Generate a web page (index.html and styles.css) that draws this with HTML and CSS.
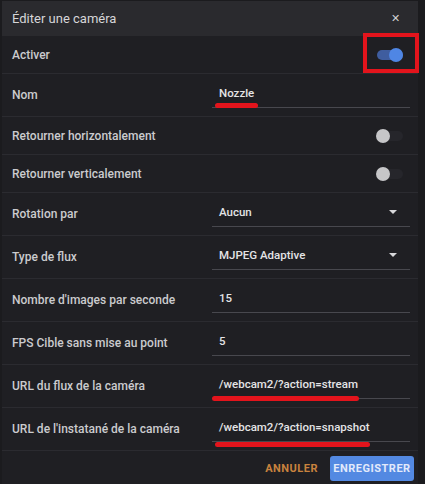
FILE: index.html
```html
<!DOCTYPE html>
<html lang="fr">
<head>
<meta charset="utf-8">
<title>Éditer une caméra</title>
<link rel="stylesheet" href="styles.css">
</head>
<body>
<div class="dialog">
  <div class="header">
    <span class="title">Éditer une caméra</span>
    <span class="close">✕</span>
  </div>
  <div class="body">
    <div class="row sw">
      <span class="label">Activer</span>
      <span class="switch on"><span class="track"></span><span class="thumb"></span></span>
      <span class="mark-box"></span>
    </div>
    <div class="row inp">
      <span class="label">Nom</span>
      <span class="field"><span class="val">Nozzle</span></span>
      <span class="mark-line m-nom"></span>
    </div>
    <div class="row sw">
      <span class="label">Retourner horizontalement</span>
      <span class="switch"><span class="track"></span><span class="thumb"></span></span>
    </div>
    <div class="row sw">
      <span class="label">Retourner verticalement</span>
      <span class="switch"><span class="track"></span><span class="thumb"></span></span>
    </div>
    <div class="row inp">
      <span class="label">Rotation par</span>
      <span class="field select"><span class="val">Aucun</span><span class="caret"></span></span>
    </div>
    <div class="row inp">
      <span class="label">Type de flux</span>
      <span class="field select"><span class="val">MJPEG Adaptive</span><span class="caret"></span></span>
    </div>
    <div class="row inp">
      <span class="label">Nombre d'images par seconde</span>
      <span class="field"><span class="val">15</span></span>
    </div>
    <div class="row inp">
      <span class="label">FPS Cible sans mise au point</span>
      <span class="field"><span class="val">5</span></span>
    </div>
    <div class="row inp">
      <span class="label">URL du flux de la caméra</span>
      <span class="field"><span class="val">/webcam2/?action=stream</span></span>
      <span class="mark-line m-stream"></span>
    </div>
    <div class="row inp last">
      <span class="label">URL de l'instatané de la caméra</span>
      <span class="field"><span class="val">/webcam2/?action=snapshot</span></span>
      <span class="mark-line m-snap"></span>
    </div>
    <div class="actions">
      <span class="btn-text">ANNULER</span>
      <span class="btn-primary">ENREGISTRER</span>
    </div>
  </div>
</div>
</body>
</html>
```
FILE: styles.css
```css
* { box-sizing: border-box; }
html, body { margin: 0; padding: 0; }
body {
  width: 425px;
  height: 484px;
  overflow: hidden;
  background: #1b1b1e;
  font-family: Roboto, "Liberation Sans", sans-serif;
  -webkit-font-smoothing: antialiased;
}
.dialog {
  margin: 1px 0 0 2px;
  width: 416px;
  background: #1f1f23;
}
.header {
  height: 35px;
  background: #2a2a2e;
  display: flex;
  align-items: center;
  justify-content: space-between;
  padding: 0 18px 0 10px;
}
.title {
  color: #d6d6d8;
  font-size: 13px;
  font-weight: 400;
}
.close {
  color: #d0d0d2;
  font-size: 11px;
}
.body { padding: 0; }
.row {
  position: relative;
  display: flex;
  align-items: center;
  border-bottom: 1px solid #2b2b30;
  padding-left: 10px;
}
.row.sw { height: 38px; }
.row.inp { height: 43px; }
.label {
  width: 200px;
  flex: none;
  color: #cbcbce;
  font-size: 12px;
  font-weight: 500;
}
.switch {
  position: relative;
  margin-left: auto;
  margin-right: 14px;
  width: 28px;
  height: 16px;
  display: flex;
  align-items: center;
}
.track {
  width: 26px;
  height: 10px;
  border-radius: 5px;
  background: #26262b;
  margin-left: 1px;
}
.thumb {
  position: absolute;
  left: 0;
  top: 1px;
  width: 14px;
  height: 14px;
  border-radius: 50%;
  background: #c6c6c8;
}
.switch.on .track { background: #3f5d9f; }
.switch.on .thumb { left: 13px; background: #4f86e4; }
.field {
  flex: 1;
  margin-right: 8px;
  align-self: stretch;
  display: flex;
  align-items: center;
  padding: 4px 0 0 7px;
  border-bottom: 1px solid #48484e;
  margin-bottom: 8px;
  color: #e4e4e6;
  font-size: 11.5px;
  font-weight: 500;
}
.select .val { flex: 1; }
.caret {
  width: 0;
  height: 0;
  border-left: 4px solid transparent;
  border-right: 4px solid transparent;
  border-top: 4px solid #d8d8da;
  margin-right: 13px;
}
.mark-box {
  position: absolute;
  left: 361px;
  top: -3px;
  width: 56px;
  height: 40px;
  border: 4px solid #e3141c;
}
.mark-line {
  position: absolute;
  height: 5px;
  border-radius: 3px;
  background: #e3141c;
}
.m-nom { left: 213px; top: 29px; width: 43px; }
.m-stream { left: 210px; top: 31px; width: 147px; }
.m-snap { left: 213px; top: 34px; width: 155px; }
.actions {
  display: flex;
  justify-content: flex-end;
  align-items: center;
  height: 35px;
  padding-right: 4px;
  gap: 12px;
}
.btn-text {
  color: #c8823e;
  font-size: 11px;
  font-weight: 700;
  letter-spacing: 0.5px;
}
.btn-primary {
  background: #5389e2;
  color: #e2eafb;
  font-size: 11px;
  font-weight: 700;
  letter-spacing: 0.5px;
  height: 25px;
  width: 84px;
  display: flex;
  align-items: center;
  justify-content: center;
  border-radius: 3px;
}
```
